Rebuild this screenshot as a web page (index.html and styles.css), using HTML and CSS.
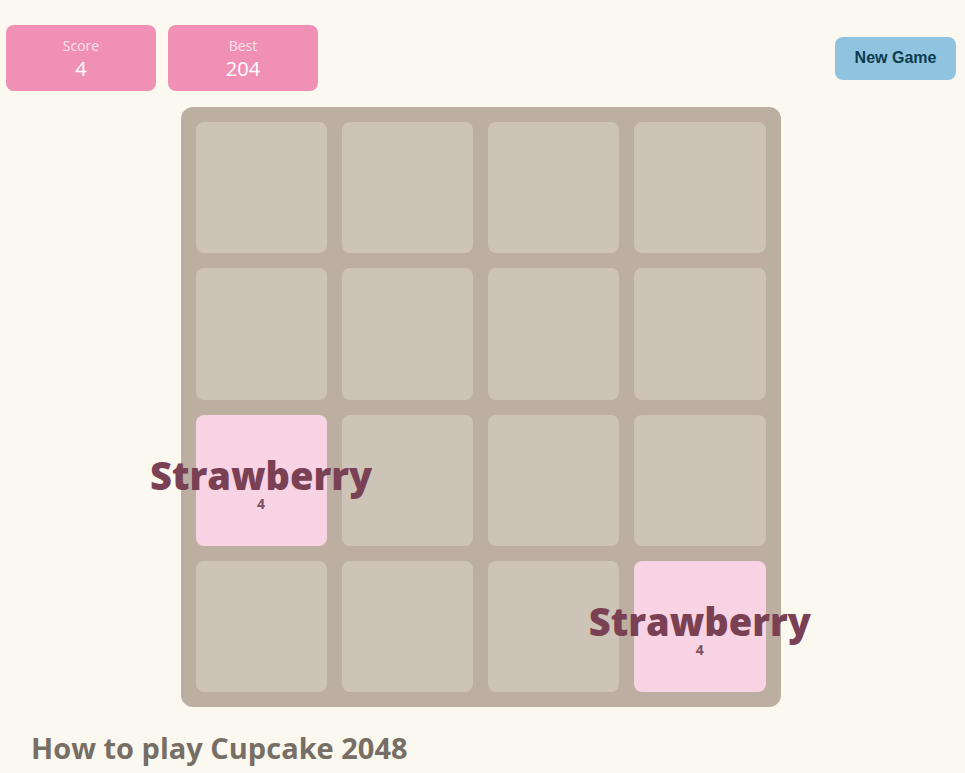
FILE: index.html
```html
<!DOCTYPE html>
<html lang="en">
<head>
    <meta charset="UTF-8" />
    <meta name="viewport" content="width=device-width, initial-scale=1.0"/>
    <title>Cupcake 2048</title>
    <link rel="stylesheet" href="styles.css">
</head>
<body>
    <header class="top-bar">
        <div class="scores">
            <div class="score-box">
                <span class="score-label">Score</span>
                <span class="score-value">4</span>
            </div>
            <div class="score-box">
                <span class="score-label">Best</span>
                <span class="score-value">204</span>
            </div>
        </div>
        <button class="new-game">New Game</button>
    </header>

    <main>
        <div class="board">
            <div class="cell"></div>
            <div class="cell"></div>
            <div class="cell"></div>
            <div class="cell"></div>

            <div class="cell"></div>
            <div class="cell"></div>
            <div class="cell"></div>
            <div class="cell"></div>

            <div class="cell tile tile-4">
                <span class="tile-name">Strawberry</span>
                <span class="tile-num">4</span>
            </div>
            <div class="cell"></div>
            <div class="cell"></div>
            <div class="cell"></div>

            <div class="cell"></div>
            <div class="cell"></div>
            <div class="cell"></div>
            <div class="cell tile tile-4">
                <span class="tile-name">Strawberry</span>
                <span class="tile-num">4</span>
            </div>
        </div>

        <h2 class="how-to">How to play Cupcake 2048</h2>
    </main>
</body>
</html>
```

FILE: styles.css
```css
body {
    font-family: "Open Sans", "Noto Sans", sans-serif;
    margin: 0;
    padding: 0;
    background-color: #fbf8ef;
    color: #776e65;
}

.top-bar {
    display: flex;
    justify-content: space-between;
    align-items: center;
    padding: 25px 9px 0 6px;
}

.scores {
    display: flex;
    gap: 12px;
}

.score-box {
    width: 150px;
    height: 66px;
    box-sizing: border-box;
    padding-top: 12px;
    display: flex;
    flex-direction: column;
    align-items: center;
    background-color: #f090b4;
    border-radius: 8px;
}

.score-label {
    font-size: 14px;
    line-height: 18px;
    color: #fde3ec;
}

.score-value {
    font-size: 20px;
    line-height: 28px;
    color: #ffffff;
}

.new-game {
    width: 121px;
    height: 43px;
    font-family: "Liberation Sans", Arial, sans-serif;
    font-size: 16px;
    font-weight: bold;
    color: #0d3b4f;
    background-color: #8fc3e0;
    border: none;
    border-radius: 8px;
    cursor: pointer;
}

main {
    display: flex;
    flex-direction: column;
    align-items: center;
    padding-top: 16px;
}

.board {
    width: 600px;
    height: 600px;
    box-sizing: border-box;
    padding: 15px;
    display: grid;
    grid-template-columns: repeat(4, minmax(0, 1fr));
    grid-template-rows: repeat(4, minmax(0, 1fr));
    gap: 15px;
    background-color: #bcaea1;
    border-radius: 12px;
    margin-right: 4px;
}

.cell {
    background-color: #cec3b7;
    border-radius: 8px;
}

/* tile text is wider than the cell, so let it spill out centred
   and sit above the neighbouring cells */
.tile {
    position: relative;
    z-index: 1;
    display: flex;
    flex-direction: column;
    align-items: center;
    justify-content: center;
    white-space: nowrap;
}

.tile-4 {
    background-color: #f8d3e3;
    color: #7a4154;
}

.tile-name {
    font-size: 38px;
    font-weight: 800;
    line-height: 30px;
    margin-top: 13px;
}

.tile-num {
    font-size: 14px;
    font-weight: bold;
    line-height: 18px;
    margin-top: 5px;
    color: #7d5060;
}

.how-to {
    align-self: flex-start;
    margin: 21px 0 0 31px;
    font-size: 29px;
    font-weight: bold;
    color: #776e65;
}
```
